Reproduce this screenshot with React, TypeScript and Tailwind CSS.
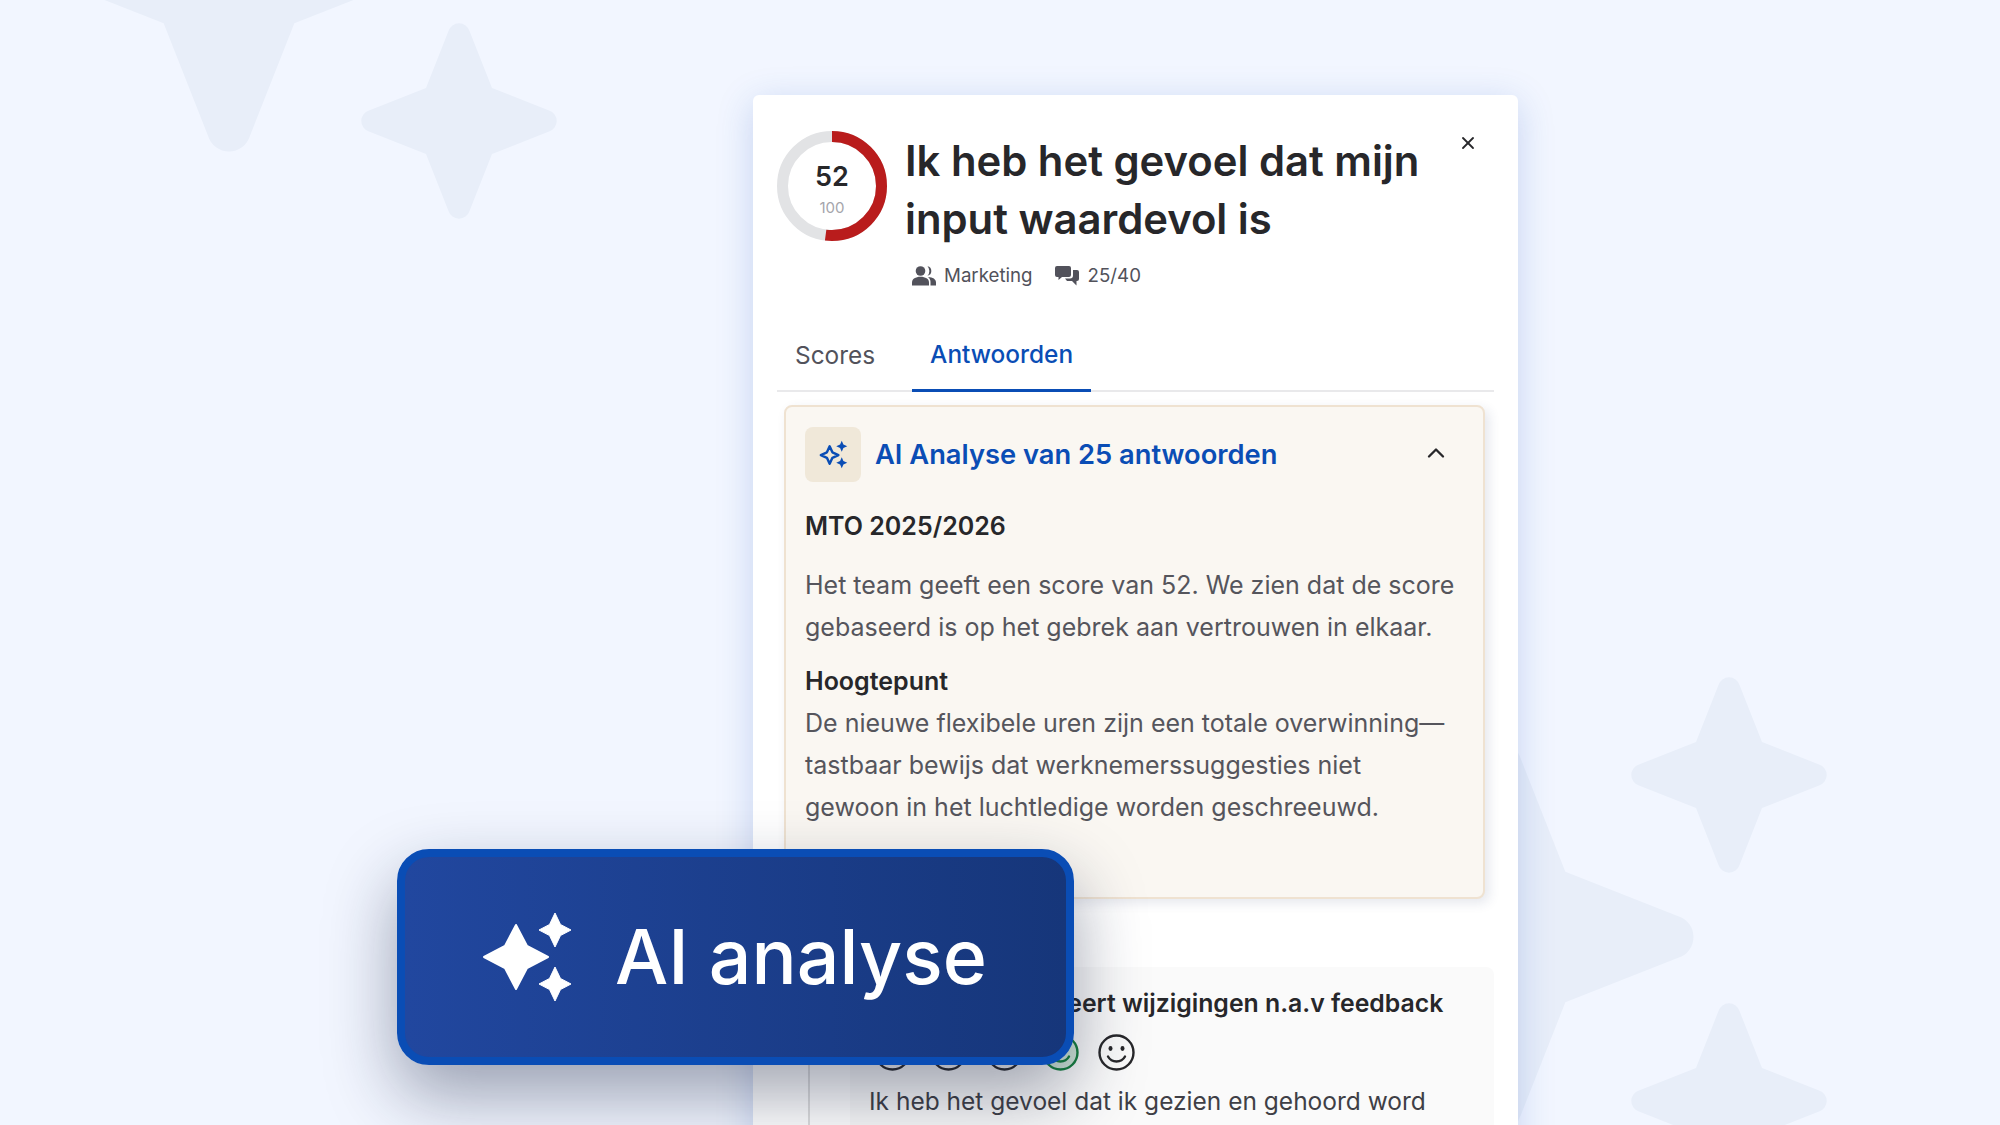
import { ChevronUp, X } from "lucide-react";

const font = "font-['Inter',sans-serif]";

function BgStar({ className }: { className: string }) {
  return (
    <svg viewBox="-100 -100 200 200" className={`absolute text-[#e8eef9] ${className}`}>
      <path
        fill="currentColor"
        d="M-33 -33 L-10.5 -90 A11 11 0 0 1 10.5 -90 L33 -33 L90 -10.5 A11 11 0 0 1 90 10.5 L33 33 L10.5 90 A11 11 0 0 1 -10.5 90 L-33 33 L-90 10.5 A11 11 0 0 1 -90 -10.5 Z"
      />
    </svg>
  );
}

function ScoreRing() {
  return (
    <div className="relative w-[110px] h-[110px] shrink-0">
      <svg viewBox="0 0 110 110" className="w-full h-full -rotate-90">
        <circle cx="55" cy="55" r="49.5" fill="none" stroke="#e2e3e5" strokeWidth="11" />
        <circle cx="55" cy="55" r="49.5" fill="none" stroke="#b91c1c" strokeWidth="11" strokeDasharray="161.7 311" />
      </svg>
      <div className="absolute inset-0 flex flex-col items-center">
        <span className="mt-[28px] text-[27px] leading-[36px] font-semibold text-[#27272a]">52</span>
        <span className="mt-[3px] text-[15px] leading-[20px] text-[#a5a5ab]">100</span>
      </div>
    </div>
  );
}

function UsersIcon() {
  return (
    <svg viewBox="0 0 24 20" className="w-[24px] h-[20px] text-[#52525b]" fill="currentColor">
      <circle cx="8.5" cy="5" r="4.8" />
      <path d="M15.500 .3a4.800 4.800 0 0 1 0 9.400 6.800 6.800 0 0 0 0-9.400Z" />
      <path d="M0 19.500v-3C0 13 3.600 10.800 8.500 10.800s8.500 2.200 8.500 5.700v3Z" />
      <path d="M18.500 19.500v-3.500c0-2-.9-3.700-2.500-5 5 .2 8 2.300 8 5.500v3Z" />
    </svg>
  );
}

function ChatIcon() {
  return (
    <svg viewBox="0 0 24 20" className="w-[24px] h-[20px] text-[#52525b]" fill="currentColor">
      <path d="M2 0h12a2 2 0 0 1 2 2v7a2 2 0 0 1-2 2H7l-3.500 3v-3H2a2 2 0 0 1-2-2V2a2 2 0 0 1 2-2Z" />
      <path d="M18 4h4a2 2 0 0 1 2 2v7a2 2 0 0 1-2 2h-.5v4.500L17 15h-5l-2-2.400h5a3 3 0 0 0 3-3Z" />
    </svg>
  );
}

function Smiley({ green }: { green?: boolean }) {
  const color = green ? "#15803d" : "#27272a";
  return (
    <svg viewBox="0 0 37 37" className="w-[37px] h-[37px] shrink-0">
      <circle cx="18.500" cy="18.500" r="17" fill={green ? "#d1e7d8" : "none"} stroke={color} strokeWidth="2.400" />
      <ellipse cx="12.500" cy="14.500" rx="2" ry="2.400" fill={color} />
      <ellipse cx="24.500" cy="14.500" rx="2" ry="2.400" fill={color} />
      <path d="M10 22.500c2 3.600 5 5 8.500 5s6.500-1.400 8.500-5" fill="none" stroke={color} strokeWidth="2.400" strokeLinecap="round" />
    </svg>
  );
}

export default function App() {
  return (
    <div className={`relative w-[2000px] h-[1125px] overflow-hidden bg-[#f2f6ff] pl-[753px] pt-[95px] ${font}`}>
      {/* Background stars */}
      <BgStar className="left-[31px] top-[-240px] w-[396px] h-[396px]" />
      <BgStar className="left-[359px] top-[21px] w-[200px] h-[200px]" />
      <BgStar className="left-[1629px] top-[675px] w-[200px] h-[200px]" />
      <BgStar className="left-[1629px] top-[1001px] w-[200px] h-[200px]" />
      <BgStar className="left-[1302px] top-[739px] w-[396px] h-[396px]" />

      {/* Card */}
      <div className="relative w-[765px] h-[1100px] rounded-t-[6px] bg-white pl-[24px] pr-[24px] pt-[36px] shadow-[0_8px_36px_rgba(40,90,190,0.22)]">
        <button className="absolute right-[40px] top-[38px] text-[#27272a]">
          <X size={20} strokeWidth={2.200} />
        </button>

        {/* Header */}
        <div className="flex gap-[18px]">
          <ScoreRing />
          <div className="flex-1">
            <h1 className="w-[540px] pt-[1px] text-[41.8px] leading-[58px] font-semibold text-[#27272a]">
              Ik heb het gevoel dat mijn input waardevol is
            </h1>
            <div className="mt-[16px] flex items-center pl-[7px] text-[18.7px] leading-[24px] text-[#52525b]">
              <UsersIcon />
              <span className="ml-[8px]">Marketing</span>
              <span className="ml-[22px]"><ChatIcon /></span>
              <span className="ml-[9px]">25/40</span>
            </div>
          </div>
        </div>

        {/* Tabs */}
        <div className="mt-[26px] flex h-[78px] border-b-2 border-[#e9e9eb] text-[24.400px]">
          <button className="px-[18px] pt-[6px] text-[#52525b]">Scores</button>
          <button className="ml-[19px] h-[78px] border-b-[3px] border-[#0a4db5] px-[18px] pt-[6px] font-medium text-[#0a4db5]">Antwoorden</button>
        </div>

        {/* AI panel */}
        <div className="ml-[7px] mt-[13px] h-[494px] w-[701px] rounded-[8px] border-2 border-[#efe2d1] bg-[#faf7f2] px-[19px] pt-[20px] shadow-[4px_4px_12px_rgba(40,60,110,0.12)]">
          <div className="flex items-center">
            <div className="flex h-[55px] w-[56px] items-center justify-center rounded-[8px] bg-[#f0e8d9]">
              <svg viewBox="0 0 30 30" className="w-[33px] h-[33px] text-[#0a4db5]">
                <path d="M11.500 7.500 14 13l5.500 2.500L14 18l-2.500 5.500L9 18l-5.500-2.500L9 13Z" fill="none" stroke="currentColor" strokeWidth="2.200" strokeLinejoin="round" />
                <path d="M22.500 2.500 24 6l3.500 1.500L24 9l-1.500 3.500L21 9l-3.500-1.500L21 6Z" fill="currentColor" />
                <path d="M22.500 17.500 24 21l3.500 1.500L24 24l-1.500 3.500L21 24l-3.500-1.500L21 21Z" fill="currentColor" />
              </svg>
            </div>
            <span className="ml-[14px] text-[27.300px] leading-[36px] font-semibold text-[#0a4db5]">AI Analyse van 25 antwoorden</span>
            <ChevronUp size={28} strokeWidth={2} className="ml-auto mr-[14px] mt-[-4px] text-[#27272a]" />
          </div>
          <h3 className="mt-[26px] text-[25px] leading-[36px] font-semibold text-[#27272a]">MTO 2025/2026</h3>
          <p className="mt-[20px] w-[652px] text-[25px] leading-[42px] text-[#55555c]">
            Het team geeft een score van 52. We zien dat de score gebaseerd is op het gebrek aan vertrouwen in elkaar.
          </p>
          <h4 className="mt-[15px] text-[25px] leading-[36px] font-semibold text-[#27272a]">Hoogtepunt</h4>
          <p className="mt-[3px] w-[652px] text-[25px] leading-[42px] text-[#55555c]">
            De nieuwe flexibele uren zijn een totale overwinning—tastbaar bewijs dat werknemerssuggesties niet gewoon in het luchtledige worden geschreeuwd.
          </p>
        </div>

        {/* Answers */}
        <div className="ml-[31px] mt-[68px] flex h-[200px] border-l-2 border-[#dedede] pl-[40px]">
          <div className="flex-1 rounded-[8px] bg-[#fafafa] pl-[19px] pt-[21px]">
            <p className="whitespace-nowrap text-[24.800px] leading-[30px] font-semibold text-[#27272a]">Team implementeert wijzigingen n.a.v feedback</p>
            <div className="mt-[16px] flex gap-[19px] pl-[5px]">
              <Smiley />
              <Smiley />
              <Smiley />
              <Smiley green />
              <Smiley />
            </div>
            <p className="mt-[14px] text-[24.500px] leading-[32px] text-[#3f3f46]">Ik heb het gevoel dat ik gezien en gehoord word</p>
          </div>
        </div>
      </div>

      {/* AI analyse badge */}
      <div className="absolute left-[397px] top-[849px] flex h-[216px] w-[677px] items-center rounded-[32px] border-[8px] border-[#0a4db5] bg-gradient-to-r from-[#21479f] to-[#16367a] pl-[78px] shadow-[0_30px_70px_rgba(20,30,60,0.4)]">
        <svg viewBox="0 0 90 90" className="w-[90px] h-[90px] text-white">
          <path fill="currentColor" d="M33 13 44 34 65 45 44 56 33 77 22 56 1 45 22 34Z" stroke="currentColor" strokeWidth="2" strokeLinejoin="round" />
          <path fill="currentColor" d="M72 1 77.500 12.500 88 18 77.500 23.500 72 35 66.500 23.500 56 18 66.500 12.500Z" stroke="currentColor" strokeWidth="1" strokeLinejoin="round" />
          <path fill="currentColor" d="M72 55 77.500 66.500 88 72 77.500 77.500 72 89 66.500 77.500 56 72 66.500 66.500Z" stroke="currentColor" strokeWidth="1" strokeLinejoin="round" />
        </svg>
        <span className="ml-[42px] text-[75.200px] leading-[90px] font-medium text-white">AI analyse</span>
      </div>
    </div>
  );
}
